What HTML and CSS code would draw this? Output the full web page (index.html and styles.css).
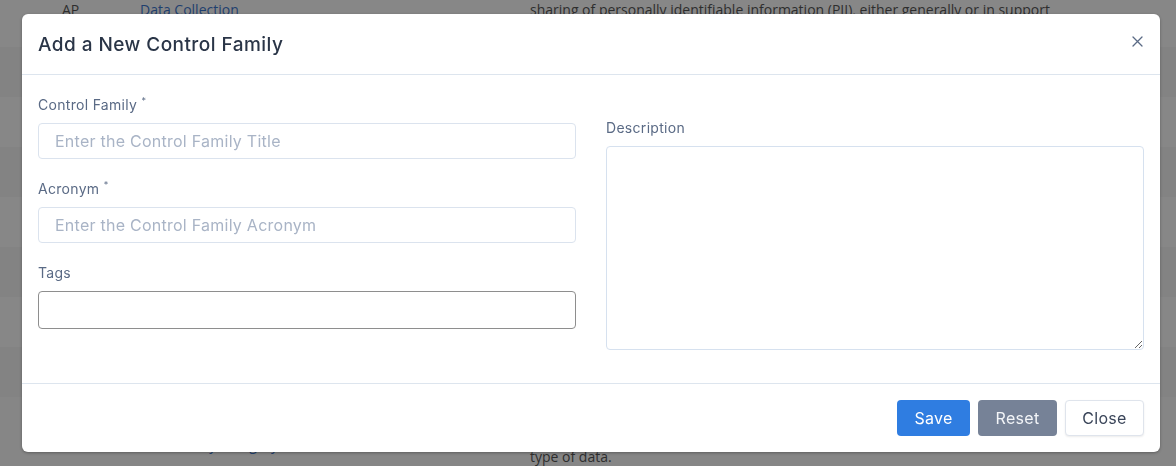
FILE: index.html
```html
<!DOCTYPE html>
<html lang="en">
<head>
<meta charset="utf-8">
<title>Add a New Control Family</title>
<link rel="stylesheet" href="styles.css">
</head>
<body>
<div class="page">
  <div class="row row-first">
    <div class="cell c1">AP</div>
    <div class="cell c2"><a href="#">Data Collection</a></div>
    <div class="cell c3">sharing of personally identifiable information (PII), either generally or in support</div>
  </div>
  <div class="row row-a"></div>
  <div class="row row-b"></div>
  <div class="row row-a"></div>
  <div class="row row-b"></div>
  <div class="row row-a"></div>
  <div class="row row-b"></div>
  <div class="row row-a"></div>
  <div class="row row-last">
    <div class="cell c1"></div>
    <div class="cell c2 c2-last"><a href="#">Privacy Category</a></div>
    <div class="cell c3">type of data.</div>
  </div>
</div>

<div class="modal" role="dialog" aria-labelledby="mtitle">
  <div class="modal-header">
    <h5 id="mtitle" class="modal-title">Add a New Control Family</h5>
    <button class="btn-close" aria-label="Close">
      <svg width="11" height="11" viewBox="0 0 11 11"><path d="M1 1L10 10M10 1L1 10" stroke="#5a6a85" stroke-width="1.3" fill="none" stroke-linecap="round"/></svg>
    </button>
  </div>
  <div class="modal-body">
    <div class="col col-left">
      <div class="group">
        <label class="label">Control Family <sup>*</sup></label>
        <input class="input" type="text" placeholder="Enter the Control Family Title">
      </div>
      <div class="group">
        <label class="label">Acronym <sup>*</sup></label>
        <input class="input" type="text" placeholder="Enter the Control Family Acronym">
      </div>
      <div class="group">
        <label class="label">Tags</label>
        <div class="tags-input"></div>
      </div>
    </div>
    <div class="col col-right">
      <div class="group">
        <label class="label">Description</label>
        <textarea class="textarea"></textarea>
      </div>
    </div>
  </div>
  <div class="modal-footer">
    <button class="btn btn-save">Save</button>
    <button class="btn btn-reset">Reset</button>
    <button class="btn btn-closebtn">Close</button>
  </div>
</div>
</body>
</html>
```

FILE: styles.css
```css
html, body {
  margin: 0;
  padding: 0;
  background-color: #858585;
  font-family: "Open Sans", "DejaVu Sans", sans-serif;
}

.page {
  width: 1176px;
  height: 466px;
  overflow: hidden;
  background-color: #858585;
}

.row {
  display: flex;
  box-sizing: border-box;
  height: 50px;
  font-size: 14px;
  color: #2e2e2e;
}
.row-a { background-color: #838383; }
.row-b { background-color: #878787; }
.row-first {
  height: 47px;
  background-color: #878787;
  align-items: flex-start;
}
.row-last {
  height: 70px;
  background-color: #868686;
  align-items: flex-end;
}

.cell { line-height: 20px; }
.c1 { width: 78px; padding-left: 62px; }
.c2 { width: 390px; }
.c2 a { color: #1f3f6e; text-decoration: none; }
.c2-last { padding-bottom: 12px; padding-left: 30px; width: 360px; }
.c3 { flex: 1; }

.modal {
  position: fixed;
  top: 14px;
  left: 22px;
  width: 1138px;
  background: #ffffff;
  border-radius: 6px;
  box-shadow: 0 1px 3px rgba(0, 0, 0, 0.3);
  font-family: "Inter", "Open Sans", sans-serif;
}

.modal-header {
  display: flex;
  align-items: center;
  justify-content: space-between;
  height: 60px;
  padding: 0 16px;
  border-bottom: 1px solid #dde5ee;
}

.modal-title {
  margin: 0;
  font-size: 19px;
  font-weight: 500;
  color: #2a3547;
  letter-spacing: 0.45px;
}

.btn-close {
  border: 0;
  background: transparent;
  padding: 0;
  width: 16px;
  height: 16px;
  display: flex;
  align-items: center;
  justify-content: center;
  margin-right: -1px;
  margin-top: -6px;
}

.modal-body {
  display: grid;
  grid-template-columns: 1fr 1fr;
  column-gap: 30px;
  padding: 20px 16px 13px;
}

.col-right { padding-top: 23px; }

.group {
  display: flex;
  flex-direction: column;
  margin-bottom: 20px;
}

.label {
  font-size: 14px;
  line-height: 20px;
  letter-spacing: 0.3px;
  color: #5a6a85;
  margin-bottom: 8px;
}
.label sup {
  font-size: 9px;
  vertical-align: top;
  line-height: 12px;
}

.input {
  box-sizing: border-box;
  height: 36px;
  padding: 0 16px;
  border: 1px solid #dbe3ee;
  border-radius: 4px;
  font-family: "Inter", "Open Sans", sans-serif;
  font-size: 16px;
  letter-spacing: 0.25px;
  color: #2a3547;
  outline: none;
}
.input::placeholder { color: #a9b4c6; }

.tags-input {
  box-sizing: border-box;
  height: 38px;
  border: 1px solid #8e8e8e;
  border-radius: 4px;
}

.textarea {
  box-sizing: border-box;
  height: 204px;
  border: 1px solid #d6e1ef;
  border-radius: 4px;
  padding: 8px 16px;
  font-family: "Inter", sans-serif;
  font-size: 15px;
  resize: vertical;
  outline: none;
}

.modal-footer {
  display: flex;
  justify-content: flex-end;
  gap: 8px;
  padding: 16px;
  border-top: 1px solid #dde5ee;
}

.btn {
  height: 36px;
  border-radius: 4px;
  font-family: "Inter", "Open Sans", sans-serif;
  font-size: 16px;
  font-weight: 400;
  letter-spacing: 0.3px;
  border: 1px solid transparent;
  padding: 0;
}
.btn-save {
  width: 73px;
  background: #2f7de1;
  color: #ffffff;
}
.btn-reset {
  width: 79px;
  background: #768297;
  color: #f3f5f8;
}
.btn-closebtn {
  width: 79px;
  background: #ffffff;
  color: #3a4559;
  border-color: #dfe4ec;
  box-shadow: 0 1px 2px rgba(0,0,0,0.08);
}
```
